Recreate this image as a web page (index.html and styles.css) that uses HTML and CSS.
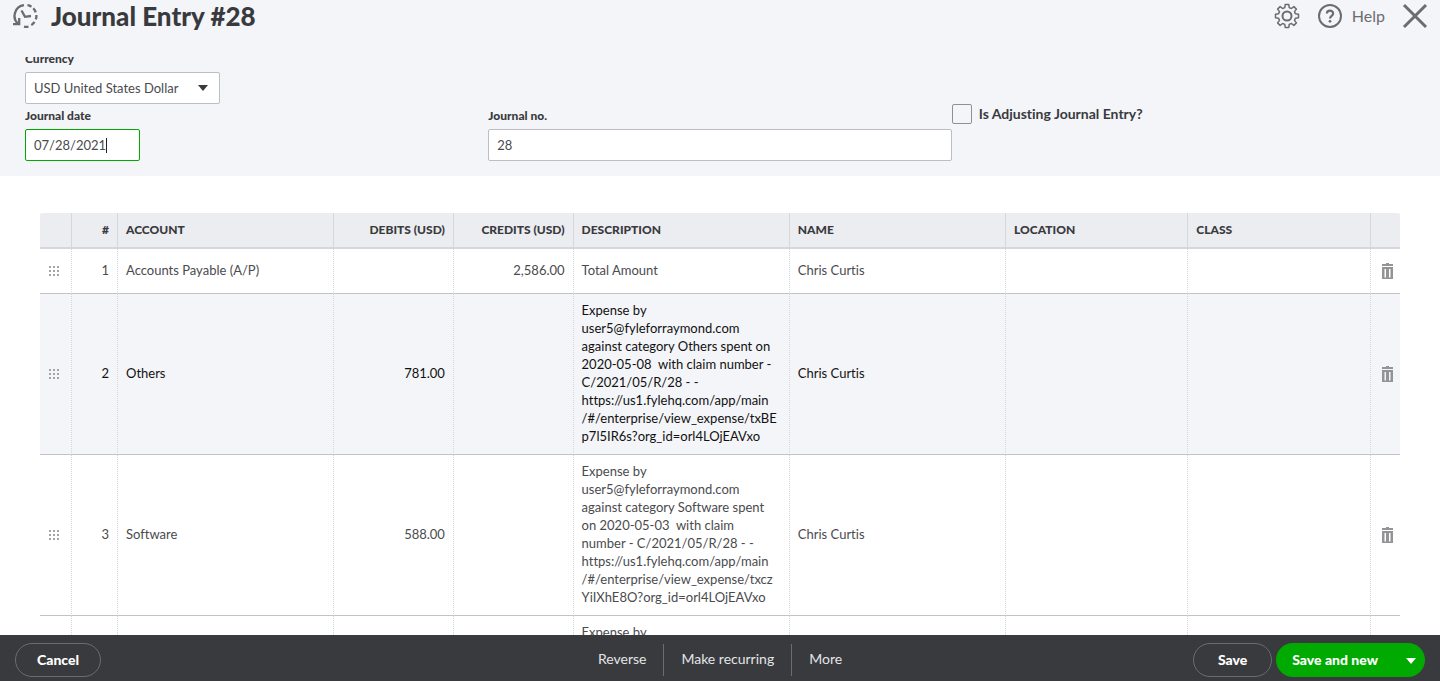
FILE: index.html
```
<!DOCTYPE html>
<html lang="en">
<head>
<meta charset="utf-8">
<meta name="viewport" content="width=device-width, initial-scale=1">
<title>Journal Entry #28</title>
<link rel="stylesheet" href="styles.css">
</head>
<body>
<svg class="symbols" aria-hidden="true">
  <symbol id="grip" viewBox="0 0 10 10">
    <path d="M0 0h2v2H0zM4 0h2v2H4zM8 0h2v2H8zM0 4h2v2H0zM4 4h2v2H4zM8 4h2v2H8zM0 8h2v2H0zM4 8h2v2H4zM8 8h2v2H8z" fill="currentColor"/>
  </symbol>
  <symbol id="trash" viewBox="0 0 11 16">
    <path d="M0 1h4V0h3v1h4v2H0z" fill="currentColor"/>
    <path fill-rule="evenodd" d="M0 4h11v12H0zM2.500 6v8.500h1.500V6zM7 6v8.500h1.500V6z" fill="currentColor"/>
  </symbol>
</svg>
<div class="app">
  <header class="topbar">
    <button class="icon-button" type="button" aria-label="Recent transactions">
      <svg width="26" height="26" viewBox="0 0 26 26" fill="none" stroke="currentColor" stroke-width="2.300">
        <path d="M12 2.200A10.800 10.800 0 0 0 6 20.800M15.500 2.200a11 11 0 0 1 4 1.500M21.300 5.300a11 11 0 0 1 2.400 4M24.400 12a11 11 0 0 1-.6 4.300M22.500 18.900a11 11 0 0 1-3.200 3.200M16.500 23.600a11 11 0 0 1-4.500 0"/>
        <path d="M1 21.200h6.200V15"/>
        <path d="M4 21.500l3.500-3.800v3.800z" fill="currentColor" stroke="none"/>
        <path d="M9.500 7.500l3.500 6.300 6-.8"/>
      </svg>
    </button>
    <h1 class="title">Journal Entry #28</h1>
    <div class="tools">
      <button class="icon-button" type="button" aria-label="Settings">
        <svg width="26" height="26" viewBox="0 0 26 26" fill="none" stroke="currentColor" stroke-width="1.500" stroke-linejoin="round">
          <path d="M10.800 4.600L11.200 1.500h3.600l.4 3.100 2.200.9 2.500-1.900 2.500 2.500-1.900 2.500.9 2.200 3.100.4v3.600l-3.100.4-.9 2.200 1.900 2.500-2.500 2.500-2.500-1.900-2.200.9-.4 3.100h-3.600l-.4-3.100-2.200-.9-2.500 1.900-2.500-2.500 1.900-2.500-.9-2.200-3.100-.4v-3.600l3.100-.4.9-2.200-1.900-2.500 2.500-2.500 2.500 1.900z"/>
          <circle cx="13" cy="13" r="4.500" stroke-width="2"/>
        </svg>
      </button>
      <button class="icon-button help" type="button">
        <svg width="26" height="26" viewBox="0 0 26 26" fill="none" stroke="currentColor" stroke-width="2">
          <circle cx="13" cy="13" r="11"/>
          <path d="M9.900 10.600c0-4 6.300-3.800 6.200-.2 0 2.400-3.100 2.400-3.100 5" stroke-width="2.200"/>
          <circle cx="13" cy="18.300" r="1.400" fill="currentColor" stroke="none"/>
        </svg>
        <span>Help</span>
      </button>
      <button class="icon-button" type="button" aria-label="Close">
        <svg width="26" height="26" viewBox="0 0 26 26" fill="none" stroke="currentColor" stroke-width="3">
          <path d="M2 2l22 22M24 2L2 24"/>
        </svg>
      </button>
    </div>
  </header>

  <main class="content">
    <form class="details" id="journal">
      <div class="field currency">
        <label for="currency">Currency</label>
        <div class="select-box">
          <select id="currency"><option>USD United States Dollar</option></select>
          <svg class="arrow" width="10" height="6" viewBox="0 0 10 6"><path d="M0 0h10L5 6z" fill="currentColor"/></svg>
        </div>
      </div>
      <div class="field">
        <label for="date">Journal date</label>
        <div class="date-box">
          <input id="date" class="active" type="text" value="07/28/2021">
          <span class="caret"></span>
        </div>
      </div>
      <div class="field">
        <label for="number">Journal no.</label>
        <input id="number" type="text" value="28">
      </div>
      <div class="adjusting">
        <input id="adjusting" type="checkbox">
        <label for="adjusting">Is Adjusting Journal Entry?</label>
      </div>
    </form>

    <div class="lines">
      <table>
        <colgroup>
          <col class="col-grip"><col class="col-index"><col class="col-text"><col class="col-amount"><col class="col-amount">
          <col class="col-text"><col class="col-text"><col class="col-tag"><col class="col-tag"><col class="col-delete">
        </colgroup>
        <thead>
          <tr><th></th><th class="num">#</th><th>ACCOUNT</th><th class="num">DEBITS (USD)</th><th class="num">CREDITS (USD)</th><th>DESCRIPTION</th><th>NAME</th><th>LOCATION</th><th>CLASS</th><th></th></tr>
        </thead>
        <tbody>
          <tr>
            <td class="grip"><svg width="10" height="10"><use href="#grip"/></svg></td>
            <td class="num">1</td><td>Accounts Payable (A/P)</td><td class="num"></td><td class="num">2,586.00</td>
            <td>Total Amount</td><td>Chris Curtis</td><td></td><td></td>
            <td class="delete"><button type="button" aria-label="Delete line 1"><svg width="11" height="16"><use href="#trash"/></svg></button></td>
          </tr>
          <tr class="current">
            <td class="grip"><svg width="10" height="10"><use href="#grip"/></svg></td>
            <td class="num">2</td><td>Others</td><td class="num">781.00</td><td class="num"></td>
            <td class="memo">Expense by
user5@fyleforraymond.com
against category Others spent on
2020-05-08  with claim number -
C/2021/05/R/28 - -
https://us1.fylehq.com/app/main
/#/enterprise/view_expense/txBE
p7l5IR6s?org_id=orl4LOjEAVxo</td>
            <td>Chris Curtis</td><td></td><td></td>
            <td class="delete"><button type="button" aria-label="Delete line 2"><svg width="11" height="16"><use href="#trash"/></svg></button></td>
          </tr>
          <tr>
            <td class="grip"><svg width="10" height="10"><use href="#grip"/></svg></td>
            <td class="num">3</td><td>Software</td><td class="num">588.00</td><td class="num"></td>
            <td class="memo">Expense by
user5@fyleforraymond.com
against category Software spent
on 2020-05-03  with claim
number - C/2021/05/R/28 - -
https://us1.fylehq.com/app/main
/#/enterprise/view_expense/txcz
YiIXhE8O?org_id=orl4LOjEAVxo</td>
            <td>Chris Curtis</td><td></td><td></td>
            <td class="delete"><button type="button" aria-label="Delete line 3"><svg width="11" height="16"><use href="#trash"/></svg></button></td>
          </tr>
          <tr>
            <td></td><td></td><td></td><td></td><td></td>
            <td class="memo">Expense by</td>
            <td></td><td></td><td></td><td></td>
          </tr>
        </tbody>
      </table>
    </div>
  </main>

  <footer class="actions">
    <div class="side"><button class="pill" type="button">Cancel</button></div>
    <div class="links">
      <button type="button">Reverse</button>
      <button type="button">Make recurring</button>
      <button type="button">More</button>
    </div>
    <div class="side end">
      <button class="pill save" type="button">Save</button>
      <div class="split">
        <button class="main" type="submit" form="journal">Save and new</button>
        <button class="more" type="button" aria-label="More save options"><svg width="10" height="6" viewBox="0 0 10 6"><path d="M0 0h10L5 6z" fill="currentColor"/></svg></button>
      </div>
    </div>
  </footer>
</div>
</body>
</html>
```

FILE: styles.css
```
* { box-sizing: border-box; }

body {
  margin: 0;
  font-family: Lato, "Open Sans", sans-serif;
  font-size: 13px;
  line-height: 18px;
  font-variant-ligatures: none;
  color: #4a4b4e;
  background: #fff;
}

button, input, select { font: inherit; color: inherit; }
button { border: 0; padding: 0; background: none; cursor: pointer; }
svg { display: block; }
.symbols { position: absolute; width: 0; height: 0; }

.app { display: flex; flex-direction: column; height: 100vh; }

.topbar {
  flex: none;
  display: flex;
  align-items: flex-start;
  gap: 13px;
  height: 57px;
  padding: 3px 12px 0;
  background: #f4f5f8;
}
.title { margin: 0; font-size: 26px; line-height: 26px; font-weight: 900; color: #393a3d; }
.icon-button { color: #6b6c72; }
.tools { display: flex; gap: 17px; margin-left: auto; }
.help { display: flex; align-items: center; gap: 9px; font-size: 16px; }

.content { flex: 1; min-height: 0; overflow: hidden; }

.details {
  display: grid;
  grid-template-columns: repeat(3, 1fr);
  row-gap: 4px;
  margin-top: -8px;
  padding: 0 25px 15px;
  background: #f4f5f8;
}
.field > label { display: block; height: 21px; font-size: 12px; line-height: 16px; font-weight: 900; color: #393a3d; }
.currency { grid-column: 1 / -1; padding-top: 2px; }
.field input, .field select {
  display: block;
  width: 100%;
  height: 32px;
  padding: 0 8px;
  border: 1px solid #babec5;
  border-radius: 2px;
  background: #fff;
  outline: 0;
}
.select-box { position: relative; width: 195px; }
.select-box select { appearance: none; }
.arrow { position: absolute; top: 13px; right: 12px; color: #393a3d; pointer-events: none; }
.date-box { position: relative; width: 115px; }
.field .active { border-color: #0a0; caret-color: transparent; }
.caret { position: absolute; top: 9px; left: 81px; width: 1px; height: 15px; background: #222; }

.adjusting { display: flex; align-items: center; align-self: start; gap: 7px; height: 20px; margin-top: -4px; font-size: 14px; font-weight: 700; color: #393a3d; }
.adjusting input { appearance: none; width: 20px; height: 20px; margin: 0; border: 1px solid #8d9096; border-radius: 2px; }

.lines { padding: 37px 40px 0; }
table { width: 100%; table-layout: fixed; border-collapse: separate; border-spacing: 0; }
.col-grip { width: 32px; }
.col-index { width: 46px; }
.col-text { width: 15.9%; }
.col-amount { width: 8.8%; }
.col-tag { width: 13.4%; }

th {
  height: 36px;
  padding: 0 8px;
  border-right: 1px solid #d4d7dc;
  border-bottom: 2px solid #d4d7dc;
  background: #ecedf1;
  color: #393a3d;
  font-size: 12px;
  font-weight: 900;
  text-align: left;
}
th:first-child { border-top-left-radius: 2px; }
th:last-child { border-top-right-radius: 2px; }
td {
  height: 45px;
  padding: 7px 8px 9px;
  border-right: 1px dotted #d4d7dc;
  border-bottom: 1px solid #c2c3c7;
  vertical-align: middle;
}
th:last-child, td:last-child { border-right: 0; }
.num { text-align: right; }
.memo { white-space: pre; vertical-align: top; }
.current { background: #f4f5f8; color: #111; }
.grip { padding: 0 9px; color: #a3a4a8; }
.delete { padding: 0 11px; }
.delete button { display: block; color: #949496; }

.actions {
  flex: none;
  display: flex;
  align-items: center;
  height: 46px;
  padding: 4px 15px 0;
  background: #393a3d;
  color: #fff;
}
.side { flex: 1; display: flex; gap: 4px; }
.end { justify-content: flex-end; }
.pill { height: 34px; padding: 0 21px; border: 1px solid #6b6c72; border-radius: 17px; font-size: 14px; font-weight: 900; }
.save { padding: 0 24px; }
.split { display: flex; height: 34px; border-radius: 17px; background: #0a0; font-size: 14px; font-weight: 900; overflow: hidden; }
.main { padding: 0 16px; }
.more { padding: 2px 9px 0 12px; }
.links { display: flex; font-size: 14px; color: #e3e5e8; }
.links button { height: 32px; padding: 0 17px 2px; }
.links button + button { border-left: 1px solid #6b6c72; }
```
